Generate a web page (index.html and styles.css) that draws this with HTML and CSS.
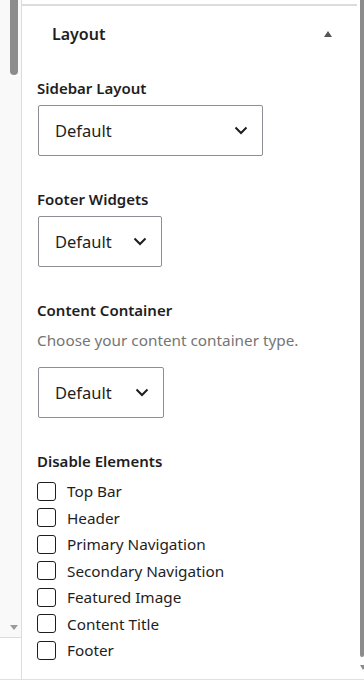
FILE: index.html
```html
<!DOCTYPE html>
<html lang="en">
<head>
    <meta charset="UTF-8">
    <link rel="stylesheet" href="styles.css">
    <title>Layout</title>
</head>
<body>
    <div class="frame">
        <div class="side">
            <div class="side-thumb"></div>
            <div class="side-fill"></div>
            <div class="side-arrow"></div>
            <div class="side-foot"></div>
        </div>

        <div class="panel">
            <div class="panel-head">
                <h2>Layout</h2>
                <span class="toggle"></span>
            </div>

            <div class="panel-body">
                <div class="field">
                    <label class="field-label">Sidebar Layout</label>
                    <div class="select select-wide">
                        <span>Default</span>
                        <svg class="chev" width="14" height="9" viewBox="0 0 14 9"><path d="M1.5 1.5 7 7l5.5-5.5" fill="none" stroke="#1e1e1e" stroke-width="2"/></svg>
                    </div>
                </div>

                <div class="field">
                    <label class="field-label">Footer Widgets</label>
                    <div class="select">
                        <span>Default</span>
                        <svg class="chev" width="14" height="9" viewBox="0 0 14 9"><path d="M1.5 1.5 7 7l5.5-5.5" fill="none" stroke="#1e1e1e" stroke-width="2"/></svg>
                    </div>
                </div>

                <div class="field">
                    <label class="field-label">Content Container</label>
                    <p class="field-help">Choose your content container type.</p>
                    <div class="select select-mid">
                        <span>Default</span>
                        <svg class="chev" width="14" height="9" viewBox="0 0 14 9"><path d="M1.5 1.5 7 7l5.5-5.5" fill="none" stroke="#1e1e1e" stroke-width="2"/></svg>
                    </div>
                </div>

                <div class="field">
                    <label class="field-label">Disable Elements</label>
                    <ul class="checks">
                        <li><span class="box"></span>Top Bar</li>
                        <li><span class="box"></span>Header</li>
                        <li><span class="box"></span>Primary Navigation</li>
                        <li><span class="box"></span>Secondary Navigation</li>
                        <li><span class="box"></span>Featured Image</li>
                        <li><span class="box"></span>Content Title</li>
                        <li><span class="box"></span>Footer</li>
                    </ul>
                </div>
            </div>
        </div>

        <div class="scroll">
            <div class="scroll-thumb"></div>
            <div class="scroll-arrow"></div>
        </div>
    </div>
</body>
</html>
```

FILE: styles.css
```css
* {
    box-sizing: border-box;
    margin: 0;
    padding: 0;
}

body {
    background-color: #fff;
    color: #1e1e1e;
    font-family: "Noto Sans", "Open Sans", sans-serif;
    height: 690px;
    overflow: hidden;
}

.frame {
    border-bottom: 1px solid #e0e0e0;
    display: flex;
    height: 680px;
}

/* left pane scrollbar */
.side {
    background-color: #f9f9f9;
    border-right: 1px solid #dcdcdc;
    display: flex;
    flex-direction: column;
    width: 22px;
}

.side-thumb {
    background-color: #8c8c8c;
    border-radius: 0 0 4px 4px;
    height: 75px;
    margin-left: 10px;
    width: 8px;
}

.side-fill {
    flex: 1;
}

.side-arrow {
    border-left: 4px solid transparent;
    border-right: 4px solid transparent;
    border-top: 5px solid #9a9a9a;
    height: 0;
    margin: 0 0 7px 10px;
    width: 0;
}

.side-foot {
    background-color: #fff;
    border-top: 1px solid #dcdcdc;
    height: 42px;
}

/* panel */
.panel {
    border-top: 2px solid #dcdcdc;
    flex: 1;
    margin-top: 4px;
}

.panel-head {
    align-items: center;
    display: flex;
    justify-content: space-between;
    padding: 16px 25px 0 30px;
}

.panel-head h2 {
    font-size: 16px;
    font-weight: 600;
    line-height: 24px;
}

.toggle {
    border-bottom: 6px solid #555;
    border-left: 4px solid transparent;
    border-right: 4px solid transparent;
    height: 0;
    width: 0;
}

.panel-body {
    padding: 32px 0 0 15px;
}

.field {
    margin-bottom: 33px;
}

.field-label {
    display: block;
    font-size: 15px;
    font-weight: 600;
    line-height: 20px;
    margin-bottom: 7px;
}

.field-help {
    color: #757575;
    font-size: 15.3px;
    line-height: 20px;
    margin: 10px 0 17px;
}

.select {
    align-items: center;
    border: 1px solid #8c8f94;
    border-radius: 2px;
    display: flex;
    font-size: 16.5px;
    height: 51px;
    justify-content: space-between;
    margin-left: 1px;
    padding: 0 14px 0 16px;
    width: 124px;
}

.select-mid {
    width: 126px;
}

.select-wide {
    width: 225px;
}

.chev {
    display: block;
}

.checks {
    list-style: none;
    margin-top: 6px;
}

.checks li {
    align-items: center;
    display: flex;
    font-size: 15.3px;
    height: 26.5px;
}

.box {
    border: 1.5px solid #1e1e1e;
    border-radius: 3px;
    height: 19px;
    margin-right: 11px;
    width: 19px;
}

/* right scrollbar */
.scroll {
    display: flex;
    flex-direction: column;
    padding-left: 3px;
    width: 7px;
}

.scroll-thumb {
    background-color: #8c8c8c;
    border-radius: 0 0 3px 3px;
    height: 657px;
}

.scroll-arrow {
    border-left: 3px solid transparent;
    border-right: 3px solid transparent;
    border-top: 5px solid #8c8c8c;
    height: 0;
    margin-top: 8px;
    width: 0;
}
```
